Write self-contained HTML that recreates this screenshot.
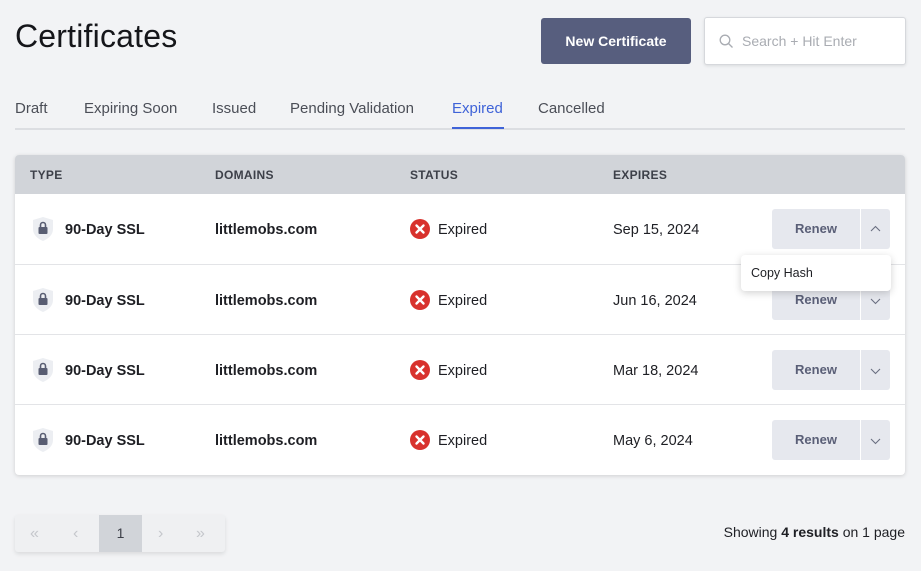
<!DOCTYPE html>
<html><head><meta charset="utf-8"><style>
*{box-sizing:border-box;margin:0;padding:0}
body{width:921px;height:571px;background:#f2f3f5;font-family:"Liberation Sans",sans-serif;color:#1e1f24;position:relative;overflow:hidden}
.abs{position:absolute}
h1{position:absolute;left:15px;top:18px;font-size:32px;font-weight:400;color:#15161a;letter-spacing:0.2px}
.btn{left:541px;top:18px;width:150px;height:46px;background:#575e7e;border-radius:3px;color:#fff;font-weight:700;font-size:14px;text-align:center;line-height:46px}
.search{left:704px;top:17px;width:202px;height:48px;background:#fff;border:1px solid #d6d8dc;border-radius:3px;box-shadow:0 1px 3px rgba(0,0,0,.1);color:#a9acb2;font-size:14px;line-height:46px;padding-left:37px}
.tabs{left:15px;top:100px;font-size:15px;color:#4b4e57}
.tabs span{position:absolute;white-space:nowrap}
.tline{left:15px;top:128px;width:890px;height:2px;background:#dcdee2}
.card{left:15px;top:155px;width:890px;height:320px;background:#fff;border-radius:4px;box-shadow:0 1px 4px rgba(0,0,0,.15);overflow:hidden}
.head{position:absolute;left:0;top:0;width:890px;height:39px;background:#d1d4d9;font-size:12px;font-weight:700;color:#3d4049;letter-spacing:.3px}
.head span,.row span{position:absolute}
.head span{top:13px}
.row{position:absolute;left:0;width:890px;height:70px;border-top:1px solid #e3e4e7;font-size:14.5px}
.row .t{top:28px}
.b{font-weight:700}
.renew{position:absolute;left:757px;top:15px;width:88px;height:40px;background:#e6e8ee;border-radius:3px 0 0 3px;color:#5a5f77;font-weight:700;font-size:13px;text-align:center;line-height:40px}
.chev{position:absolute;left:846px;top:15px;width:29px;height:40px;background:#e6e8ee;border-radius:0 3px 3px 0}
.menu{left:741px;top:255px;width:150px;height:36px;background:#fff;border-radius:4px;box-shadow:0 2px 8px rgba(0,0,0,.18);font-size:12.5px;line-height:36px;padding-left:10px;color:#1e1f24}
.pag{left:15px;top:515px;width:210px;height:37px;background:#eff0f2;box-shadow:0 2px 4px rgba(0,0,0,.1);border-radius:3px}
.pag span{position:absolute;top:0;line-height:37px;color:#c5c7cc;font-size:16px}
</style></head><body>
<h1>Certificates</h1>
<div class="abs btn">New Certificate</div>
<div class="abs search"><svg class="abs" style="left:14px;top:16px" width="15" height="15" viewBox="0 0 15 15"><circle cx="6" cy="6" r="4.8" fill="none" stroke="#a9acb2" stroke-width="1.3"/><path d="M9.5 9.5L13.5 13.5" stroke="#a9acb2" stroke-width="1.3"/></svg>Search + Hit Enter</div>
<div class="abs tabs">
<span style="left:0">Draft</span><span style="left:69px">Expiring Soon</span><span style="left:197px">Issued</span><span style="left:275px">Pending Validation</span><span style="left:437px;color:#3f63d8">Expired</span><span style="left:523px">Cancelled</span>
</div>
<div class="abs tline"></div>
<div class="abs" style="left:452px;top:127px;width:52px;height:2px;background:#3f63d8"></div>
<div class="abs card">
<div class="head"><span style="left:15px">TYPE</span><span style="left:200px">DOMAINS</span><span style="left:395px">STATUS</span><span style="left:598px">EXPIRES</span></div>
<div class="row" style="top:39px;border-top:none">
<svg style="position:absolute;left:17px;top:22px" width="22" height="26" viewBox="0 0 22 26"><path d="M11 1L21 4V13C21 19 16 23 11 25C6 23 1 19 1 13V4Z" fill="#eceef2"/><rect x="6.5" y="11" width="9" height="7" rx="1" fill="#585d72"/><path d="M8.5 11V9a2.5 2.5 0 0 1 5 0v2" fill="none" stroke="#585d72" stroke-width="1.6"/></svg>
<span class="t b" style="left:50px">90-Day SSL</span><span class="t b" style="left:200px">littlemobs.com</span>
<svg style="position:absolute;left:395px;top:25px" width="20" height="20" viewBox="0 0 20 20"><circle cx="10" cy="10" r="10" fill="#d8322d"/><path d="M6.5 6.5L13.5 13.5M13.5 6.5L6.5 13.5" stroke="#fff" stroke-width="2.4" stroke-linecap="round"/></svg>
<span class="t" style="left:423px">Expired</span><span class="t" style="left:598px">Sep 15, 2024</span>
<div class="renew">Renew</div><div class="chev"><svg style="position:absolute;left:9px;top:16px" width="11" height="8" viewBox="0 0 11 8"><path d="M1 6L5.5 1.5L10 6" fill="none" stroke="#6a6f80" stroke-width="1.1"/></svg></div>
</div>
<div class="row" style="top:109px">
<svg style="position:absolute;left:17px;top:22px" width="22" height="26" viewBox="0 0 22 26"><path d="M11 1L21 4V13C21 19 16 23 11 25C6 23 1 19 1 13V4Z" fill="#eceef2"/><rect x="6.5" y="11" width="9" height="7" rx="1" fill="#585d72"/><path d="M8.5 11V9a2.5 2.5 0 0 1 5 0v2" fill="none" stroke="#585d72" stroke-width="1.6"/></svg>
<span class="t b" style="left:50px">90-Day SSL</span><span class="t b" style="left:200px">littlemobs.com</span>
<svg style="position:absolute;left:395px;top:25px" width="20" height="20" viewBox="0 0 20 20"><circle cx="10" cy="10" r="10" fill="#d8322d"/><path d="M6.5 6.5L13.5 13.5M13.5 6.5L6.5 13.5" stroke="#fff" stroke-width="2.4" stroke-linecap="round"/></svg>
<span class="t" style="left:423px">Expired</span><span class="t" style="left:598px">Jun 16, 2024</span>
<div class="renew">Renew</div><div class="chev"><svg style="position:absolute;left:9px;top:17px" width="11" height="8" viewBox="0 0 11 8"><path d="M1 2L5.5 6.5L10 2" fill="none" stroke="#6a6f80" stroke-width="1.1"/></svg></div>
</div>
<div class="row" style="top:179px">
<svg style="position:absolute;left:17px;top:22px" width="22" height="26" viewBox="0 0 22 26"><path d="M11 1L21 4V13C21 19 16 23 11 25C6 23 1 19 1 13V4Z" fill="#eceef2"/><rect x="6.5" y="11" width="9" height="7" rx="1" fill="#585d72"/><path d="M8.5 11V9a2.5 2.5 0 0 1 5 0v2" fill="none" stroke="#585d72" stroke-width="1.6"/></svg>
<span class="t b" style="left:50px">90-Day SSL</span><span class="t b" style="left:200px">littlemobs.com</span>
<svg style="position:absolute;left:395px;top:25px" width="20" height="20" viewBox="0 0 20 20"><circle cx="10" cy="10" r="10" fill="#d8322d"/><path d="M6.5 6.5L13.5 13.5M13.5 6.5L6.5 13.5" stroke="#fff" stroke-width="2.4" stroke-linecap="round"/></svg>
<span class="t" style="left:423px">Expired</span><span class="t" style="left:598px">Mar 18, 2024</span>
<div class="renew">Renew</div><div class="chev"><svg style="position:absolute;left:9px;top:17px" width="11" height="8" viewBox="0 0 11 8"><path d="M1 2L5.5 6.5L10 2" fill="none" stroke="#6a6f80" stroke-width="1.1"/></svg></div>
</div>
<div class="row" style="top:249px">
<svg style="position:absolute;left:17px;top:22px" width="22" height="26" viewBox="0 0 22 26"><path d="M11 1L21 4V13C21 19 16 23 11 25C6 23 1 19 1 13V4Z" fill="#eceef2"/><rect x="6.5" y="11" width="9" height="7" rx="1" fill="#585d72"/><path d="M8.5 11V9a2.5 2.5 0 0 1 5 0v2" fill="none" stroke="#585d72" stroke-width="1.6"/></svg>
<span class="t b" style="left:50px">90-Day SSL</span><span class="t b" style="left:200px">littlemobs.com</span>
<svg style="position:absolute;left:395px;top:25px" width="20" height="20" viewBox="0 0 20 20"><circle cx="10" cy="10" r="10" fill="#d8322d"/><path d="M6.5 6.5L13.5 13.5M13.5 6.5L6.5 13.5" stroke="#fff" stroke-width="2.4" stroke-linecap="round"/></svg>
<span class="t" style="left:423px">Expired</span><span class="t" style="left:598px">May 6, 2024</span>
<div class="renew">Renew</div><div class="chev"><svg style="position:absolute;left:9px;top:17px" width="11" height="8" viewBox="0 0 11 8"><path d="M1 2L5.5 6.5L10 2" fill="none" stroke="#6a6f80" stroke-width="1.1"/></svg></div>
</div>
</div>
<div class="abs menu">Copy Hash</div>
<div class="abs pag">
<span style="left:15px">«</span><span style="left:58px">‹</span>
<div style="position:absolute;left:84px;top:0;width:43px;height:37px;background:#d1d4d9;text-align:center;line-height:37px;font-size:14px;color:#3d4049">1</div>
<span style="left:143px">›</span><span style="left:181px">»</span>
</div>
<div class="abs" style="right:16px;top:524px;font-size:14px;color:#1e1f24">Showing <b>4 results</b> on 1 page</div>
</body></html>
